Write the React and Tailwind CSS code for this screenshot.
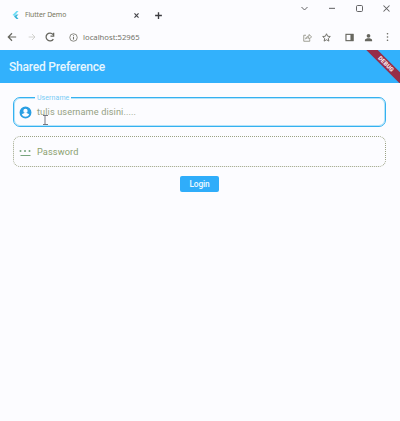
import React from "react";

function Stroke({ className, children, size = 12, width = 1.2 }) {
  return (
    <svg
      className={`block shrink-0 ${className || ""}`}
      width={size}
      height={size}
      viewBox="0 0 12 12"
      fill="none"
      stroke="currentColor"
      strokeWidth={width}
    >
      {children}
    </svg>
  );
}

function TabStrip() {
  return (
    <div className="flex h-[28px] items-start">
      <div className="flex h-[28px] items-center pt-[2px] pl-[12px]">
        <svg className="block shrink-0" width="7" height="8" viewBox="0 0 7 8">
          <path d="M4.500 0H6.500L2.500 5 .5 4z" fill="#6bdcf5" />
          <path d="M4.500 3.500H6.500L4.500 5.500 6.500 8H4.500L2 5.500z" fill="#38b4d8" />
        </svg>
        <span className="ml-[6px] w-[108px] text-[6.900px] leading-[10px] tracking-[-0.12px] text-[#77775c]">Flutter Demo</span>
        <Stroke size={7} width={2} className="text-[#45454a]">
          <path d="M2.500 2.500l7 7M9.500 2.500l-7 7" />
        </Stroke>
        <Stroke size={9} width={1.8} className="ml-[13.5px] text-[#3c3c40]">
          <path d="M6 1.500v9M1.500 6h9" />
        </Stroke>
      </div>
      <div className="ml-auto flex h-[16px] items-center pr-[9px] text-[#606062]">
        <Stroke size={9} width={1.3}>
          <path d="M2 4l4 4L10 4" />
        </Stroke>
        <Stroke size={8} width={1.5} className="ml-[19px]">
          <path d="M1.500 6.500h9" />
        </Stroke>
        <Stroke size={9} width={1.3} className="ml-[19px]">
          <rect x="2" y="2" width="8" height="8" rx="1.500" />
        </Stroke>
        <Stroke size={9} width={1.4} className="ml-[18px]">
          <path d="M2 2l8 8M10 2l-8 8" />
        </Stroke>
      </div>
    </div>
  );
}

function Toolbar() {
  return (
    <div className="flex h-[22px] items-center pb-[4px] text-[#66665f]">
      <Stroke size={10} width={1.4} className="ml-[7px]">
        <path d="M11 6H1.500M6 1.500L1.500 6 6 10.500" />
      </Stroke>
      <Stroke size={8} width={1.2} className="ml-[11px] text-[#c9c9c4]">
        <path d="M1 6h9.500M6 1.500L10.500 6 6 10.500" />
      </Stroke>
      <Stroke size={10} width={1.5} className="ml-[9px]">
        <path d="M10 8.500A4.700 4.700 0 1 1 9.600 3M10.400 1v3.800H6.600" />
      </Stroke>
      <Stroke size={9} width={1.1} className="ml-[14px] text-[#74746c]">
        <circle cx="6" cy="6" r="5" />
        <path d="M6 5.300v3.500M6 3v1.300" strokeWidth="1.400" />
      </Stroke>
      <span className="ml-[5px] text-[7.700px] leading-[10px] text-[#73736a]">localhost:52965</span>
      <div className="ml-auto flex items-center pr-[9px]">
        <Stroke size={9} width={1.1} className="text-[#8d8d80]">
          <path d="M4 3H1v8h8V8.500M3.500 8C4 5.500 5.500 4.200 8 4.200V2l3.500 3.200L8 8.200V6.200C6 6.200 4.800 6.600 3.500 8z" />
        </Stroke>
        <Stroke size={9} width={1.2} className="ml-[10px] text-[#66665f]">
          <path d="M6 1l1.500 3.300 3.600.4-2.700 2.500.8 3.600L6 9l-3.200 1.800.8-3.600L.9 4.700l3.600-.4z" />
        </Stroke>
        <Stroke size={9} width={1.500} className="ml-[14px]">
          <rect x="1.300" y="1.800" width="9.400" height="8.400" />
          <path d="M8 2h2.500v8H8z" fill="currentColor" />
        </Stroke>
        <svg className="ml-[10px] block" width="9" height="9" viewBox="0 0 12 12" fill="currentColor">
          <circle cx="6" cy="3.700" r="2.500" />
          <path d="M1.200 11V9.200C1.200 7.600 4 6.900 6 6.900s4.800.7 4.800 2.300V11z" />
        </svg>
        <svg className="ml-[12px] block" width="6" height="10" viewBox="0 0 6 10" fill="currentColor">
          <circle cx="2.500" cy="1.800" r=".8" />
          <circle cx="2.500" cy="5" r=".8" />
          <circle cx="2.500" cy="8.200" r=".8" />
        </svg>
      </div>
    </div>
  );
}

export default function App() {
  return (
    <div className="flex h-[421px] w-[400px] flex-col overflow-hidden bg-[#fcfcff] font-['Roboto',sans-serif]">
      <div className="font-['Noto_Sans',sans-serif]">
        <TabStrip />
        <Toolbar />
      </div>
      <header className="relative flex h-[33px] items-center overflow-hidden bg-[#32b1fc] pl-[9px]">
        <h1 className="text-[12px] leading-[16px] font-medium tracking-[-0.2px] text-[#e6f6ff]">Shared Preference</h1>
        <div className="absolute top-[10px] left-[355px] flex h-[8px] w-[62px] rotate-45 items-center justify-center bg-[#972d49] text-[6px] leading-[8px] font-black text-[#f5e3ea]">
          DEBUG
        </div>
      </header>
      <main className="flex flex-col px-[13px] pt-[14px]">
        <div className="relative flex h-[30px] w-[373px] items-center rounded-[7px] border border-[#35b1f0] pl-[5px] shadow-[inset_0_0_0_1px_#b5e4fa]">
          <span className="absolute top-[-4px] left-[21px] bg-[#fcfcff] px-[2px] text-[7px] leading-[8px] tracking-[0.080px] text-[#7accf5]">
            Username
          </span>
          <svg className="block shrink-0" width="13" height="13" viewBox="0 0 24 24" fill="#2a9fe3">
            <path d="M12 1a11 11 0 1 0 0 22 11 11 0 0 0 0-22zm0 4a4 4 0 1 1 0 8 4 4 0 0 1 0-8zm0 15a8 8 0 0 1-6.800-3.800c.1-2.200 4.600-3.400 6.800-3.400s6.700 1.200 6.800 3.400A8 8 0 0 1 12 20z" />
          </svg>
          <span className="ml-[5px] text-[9.200px] leading-[12px] tracking-[0.1px] text-[#94a183]">
            tulis username disini.....
          </span>
          <svg className="absolute top-[17px] left-[28px]" width="7" height="10" viewBox="0 0 7 10" fill="none" stroke="#777780">
            <path d="M1 .5h5M3 .5v9M1 9.500h5" />
          </svg>
        </div>
        <div className="mt-[9px] flex h-[31px] w-[373px] items-center rounded-[7px] border border-dotted border-[#9ba285] pl-[5px]">
          <svg className="block shrink-0" width="13" height="10" viewBox="0 0 13 10" fill="#77a47e">
            <path d="M1.500 8h10v1h-10z" />
            <circle cx="1.500" cy="4" r="1" />
            <circle cx="6" cy="4" r="1" />
            <circle cx="10.500" cy="4" r="1" />
          </svg>
          <span className="ml-[5px] text-[9.200px] leading-[12px] tracking-[0.12px] text-[#8ba16f]">Password</span>
        </div>
        <button className="mt-[9px] mr-[1px] flex h-[16px] w-[39px] items-center justify-center self-center rounded-[2px] bg-[#2fadfa] text-[8.300px] font-medium tracking-[-0.1px] text-[#eefaff]">
          Login
        </button>
      </main>
    </div>
  );
}
